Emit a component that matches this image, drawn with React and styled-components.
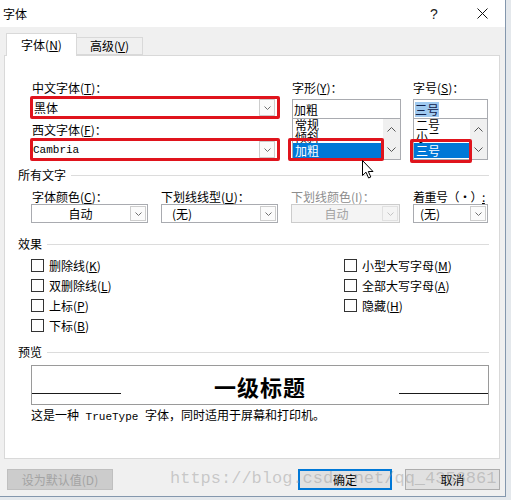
import React from "react";
import styled, { createGlobalStyle } from "styled-components";

const GlobalStyle = createGlobalStyle`
  html, body { margin: 0; padding: 0; }
  body {
    background: #e4e8ec;
    font-family: "Noto Sans CJK SC", "Noto Sans", sans-serif;
    font-size: 12px;
    color: #000;
  }
`;

const Screen = styled.div`
  position: relative;
  width: 511px;
  height: 500px;
  overflow: hidden;
  background: #e4e8ec;
`;

const Dialog = styled.div`
  width: 506px;
  height: 497px;
  box-sizing: border-box;
  background: #f0f0f0;
  border-right: 1px solid #8497ad;
  border-bottom: 1px solid #8497ad;
  display: flex;
  flex-direction: column;
`;

const TitleBar = styled.div`
  height: 27px;
  flex: none;
  background: #fff;
  display: flex;
  align-items: center;
  padding-left: 3px;
`;

const Title = styled.div`
  flex: 1;
  font-size: 12px;
  line-height: 16px;
`;

const CaptionButton = styled.div`
  width: 46px;
  height: 27px;
  margin-left: ${(p) => p.$ml || 0}px;
  display: flex;
  align-items: center;
  justify-content: center;
  font-family: "Liberation Sans", sans-serif;
  font-size: 14px;
  color: #222;
`;

const Body = styled.div`
  flex: 1;
  display: flex;
  flex-direction: column;
  padding: 6px 5px 0 4px;
`;

const TabStrip = styled.div`
  height: 22px;
  display: flex;
  align-items: flex-end;
  padding-left: 2px;
  position: relative;
  z-index: 1;
`;

const Tab = styled.div`
  box-sizing: border-box;
  width: ${(p) => p.$w}px;
  height: ${(p) => (p.$active ? 23 : 18)}px;
  margin-bottom: ${(p) => (p.$active ? -1 : 0)}px;
  background: ${(p) => (p.$active ? "#fff" : "#f0f0f0")};
  border: 1px solid #d9d9d9;
  border-bottom: ${(p) => (p.$active ? "none" : "1px solid #d9d9d9")};
  border-left: ${(p) => (p.$noLeft ? "none" : "1px solid #d9d9d9")};
  display: flex;
  align-items: center;
  justify-content: center;
  line-height: 16px;
  padding-bottom: ${(p) => (p.$active ? 1 : 0)}px;
`;

const Panel = styled.div`
  height: 404px;
  box-sizing: border-box;
  background: #fff;
  border: 1px solid #d9d9d9;
  display: flex;
  flex-direction: column;
`;

const PickRow = styled.div`
  display: grid;
  grid-template-columns: 250px 109px 75px;
  column-gap: 12px;
  margin: 24px 0 0 25px;
`;

const Col = styled.div`
  position: relative;
  display: flex;
  flex-direction: column;
`;

const FieldLabel = styled.div`
  height: 16px;
  line-height: 16px;
  white-space: nowrap;
  padding-left: ${(p) => p.$pad || 0}px;
  margin-top: ${(p) => p.$mt || 0}px;
  letter-spacing: ${(p) => p.$ls || 0}px;
  color: ${(p) => (p.$disabled ? "#8d8d8d" : "#000")};
`;

const RedBox = styled.div`
  height: 23px;
  box-sizing: border-box;
  border: 3px solid #e0141d;
  border-radius: 2px;
  background: #fff;
  display: flex;
  align-items: stretch;
`;

const ComboText = styled.div`
  flex: 1;
  display: flex;
  align-items: center;
  justify-content: ${(p) => (p.$center ? "center" : "flex-start")};
  padding-left: ${(p) => (p.$center ? 0 : p.$pad ?? 2)}px;
  color: ${(p) => (p.$disabled ? "#a3a3a3" : "#000")};
  white-space: pre;
  overflow: hidden;
`;

const Mono = styled.span`
  font-family: "Liberation Mono", monospace;
  font-size: 11px;
  white-space: pre;
`;

const ArrowBox = styled.div`
  width: 16px;
  box-sizing: border-box;
  margin: ${(p) => p.$m || "0 2px 0 0"};
  border: 1px solid ${(p) => (p.$disabled ? "#e0e0e0" : "#cdcdcd")};
  background: ${(p) => (p.$disabled ? "#f4f4f4" : "#fbfbfb")};
  display: flex;
  align-items: center;
  justify-content: center;
`;

const TextInput = styled.div`
  height: 20px;
  margin-top: 3px;
  box-sizing: border-box;
  border: 1px solid #a9abb0;
  background: #fff;
  display: flex;
  align-items: center;
  padding-left: 1px;
`;

const Selection = styled.span`
  background: #9fc9ef;
  color: #10204a;
  line-height: 15px;
`;

const ListBox = styled.div`
  height: 42px;
  margin-top: -1px;
  box-sizing: border-box;
  border: 1px solid #a9abb0;
  background: #fff;
  display: flex;
`;

const ListItems = styled.div`
  flex: 1;
  overflow: hidden;
  display: flex;
  flex-direction: column;
`;

const ListItem = styled.div`
  flex: none;
  height: ${(p) => p.$h}px;
  line-height: ${(p) => p.$h}px;
  padding-left: 2px;
  overflow: hidden;
  background: ${(p) => (p.$selected ? "#0078d7" : "transparent")};
  color: ${(p) => (p.$selected ? "#fff" : "#000")};
`;

const ScrollBar = styled.div`
  width: 17px;
  display: flex;
  flex-direction: column;
  background: #f0f0f0;
`;

const ScrollBtn = styled.div`
  flex: 1;
  display: flex;
  align-items: center;
  justify-content: center;
`;

const RedOverlay = styled.div`
  position: absolute;
  left: ${(p) => p.$l}px;
  top: ${(p) => p.$t}px;
  width: ${(p) => p.$w}px;
  height: ${(p) => p.$h}px;
  box-sizing: border-box;
  border: 3px solid #e0141d;
  border-radius: 2px;
  pointer-events: none;
`;

const GroupHeader = styled.div`
  display: flex;
  align-items: center;
  height: 16px;
  margin: ${(p) => p.$mt}px 10px 0 13px;
  line-height: 16px;
  white-space: nowrap;
`;

const GroupRule = styled.div`
  flex: 1;
  height: 1px;
  margin-left: 5px;
  background: #dcdcdc;
`;

const FieldRow = styled.div`
  display: flex;
  gap: 13px;
  margin: 6px 0 0 26px;
`;

const Field = styled.div`
  width: ${(p) => p.$w}px;
  display: flex;
  flex-direction: column;
`;

const Combo = styled.div`
  height: 19px;
  margin-top: -1px;
  box-sizing: border-box;
  border: 1px solid ${(p) => (p.$disabled ? "#cccccc" : "#a9abb0")};
  background: ${(p) => (p.$disabled ? "#f4f4f4" : "#fff")};
  display: flex;
  align-items: stretch;
`;

const EffectsGrid = styled.div`
  display: flex;
  margin: 3px 0 0 26px;
`;

const CheckCol = styled.div`
  width: ${(p) => p.$w || "auto"};
  display: flex;
  flex-direction: column;
`;

const CheckRow = styled.div`
  height: 20px;
  display: flex;
  align-items: center;
  white-space: nowrap;
`;

const Box = styled.div`
  width: 13px;
  height: 13px;
  box-sizing: border-box;
  border: 1px solid #333;
  background: #fff;
  margin-right: 5px;
`;

const Preview = styled.div`
  height: 40px;
  box-sizing: border-box;
  margin: 5px 10px 0 26px;
  border: 1px solid #9a9a9a;
  display: grid;
  grid-template-columns: 89px 1fr 89px;
  align-items: center;
`;

const PreviewRule = styled.div`
  align-self: start;
  height: 28px;
  box-sizing: border-box;
  border-bottom: 1px solid #1a1a1a;
`;

const PreviewText = styled.div`
  text-align: center;
  font-size: 22px;
  font-weight: 700;
  letter-spacing: 1px;
  line-height: 28px;
  padding-top: 2px;
`;

const Caption = styled.div`
  margin: 2px 0 0 26px;
  height: 16px;
  line-height: 16px;
  white-space: nowrap;
`;

const Footer = styled.div`
  margin-top: 10px;
  height: 21px;
  display: flex;
  align-items: stretch;
  padding-left: 3px;
`;

const Button = styled.div`
  width: ${(p) => p.$w}px;
  box-sizing: border-box;
  margin-left: ${(p) => p.$ml || 0}px;
  display: flex;
  align-items: center;
  justify-content: center;
  background: ${(p) => (p.$disabled ? "#cccccc" : "#e1e1e1")};
  border: 1px solid
    ${(p) => (p.$primary ? "#0078d7" : p.$disabled ? "#bfbfbf" : "#adadad")};
  box-shadow: ${(p) => (p.$primary ? "inset 0 0 0 1px #0078d7" : "none")};
  color: ${(p) => (p.$disabled ? "#a3a3a3" : "#000")};
  white-space: nowrap;
`;

const Spacer = styled.div`
  flex: 1;
`;

const Watermark = styled.div`
  position: absolute;
  left: 170px;
  top: 467px;
  font-family: "Liberation Mono", monospace;
  font-size: 17px;
  line-height: 24px;
  color: rgba(150, 150, 150, 0.45);
  pointer-events: none;
  white-space: nowrap;
`;

const Cursor = styled.svg`
  position: absolute;
  left: 362px;
  top: 160px;
`;

const Chevron = ({ up, color = "#6b6b6b", w = 8, h = 4 }) => (
  <svg width={w + 1} height={h + 1} viewBox={`0 0 ${w + 1} ${h + 1}`}>
    <polyline
      points={
        up
          ? `0.5,${h + 0.5} ${w / 2 + 0.5},0.5 ${w + 0.5},${h + 0.5}`
          : `0.5,0.5 ${w / 2 + 0.5},${h + 0.5} ${w + 0.5},0.5`
      }
      fill="none"
      stroke={color}
      strokeWidth="1"
    />
  </svg>
);

const Key = ({ children }) => <u>{children}</u>;

const ComboArrow = ({ disabled, m }) => (
  <ArrowBox $disabled={disabled} $m={m}>
    <Chevron w={6} h={3} color={disabled ? "#c4c4c4" : "#707070"} />
  </ArrowBox>
);

const List = ({ items }) => (
  <ListBox>
    <ListItems>
      {items.map((it) => (
        <ListItem key={it.t} $h={it.h} $selected={it.sel}>
          {it.t}
        </ListItem>
      ))}
    </ListItems>
    <ScrollBar>
      <ScrollBtn>
        <Chevron up color="#555" />
      </ScrollBtn>
      <ScrollBtn>
        <Chevron color="#555" />
      </ScrollBtn>
    </ScrollBar>
  </ListBox>
);

const CheckItem = ({ label, k }) => (
  <CheckRow>
    <Box />
    {label}(<Key>{k}</Key>)
  </CheckRow>
);

export default function App() {
  return (
    <Screen>
      <GlobalStyle />
      <Dialog>
        <TitleBar>
          <Title>字体</Title>
          <CaptionButton>?</CaptionButton>
          <CaptionButton $ml={2}>
            <svg width="11" height="11" viewBox="0 0 11 11">
              <path d="M0.5 0.5 L10.5 10.5 M10.5 0.5 L0.5 10.5" stroke="#111" strokeWidth="1" />
            </svg>
          </CaptionButton>
        </TitleBar>
        <Body>
          <TabStrip>
            <Tab $active $w={71}>
              字体(<Key>N</Key>)
            </Tab>
            <Tab $w={66} $noLeft>
              高级(<Key>V</Key>)
            </Tab>
          </TabStrip>
          <Panel>
            <PickRow>
              <Col>
                <FieldLabel $pad={2}>
                  中文字体(<Key>T</Key>)：
                </FieldLabel>
                <RedBox>
                  <ComboText $pad={1}>黑体</ComboText>
                  <ComboArrow />
                </RedBox>
                <FieldLabel $pad={2} $mt={3}>
                  西文字体(<Key>F</Key>)：
                </FieldLabel>
                <RedBox>
                  <ComboText $pad={0}>
                    <Mono>Cambria</Mono>
                  </ComboText>
                  <ComboArrow />
                </RedBox>
              </Col>
              <Col>
                <FieldLabel>
                  字形(<Key>Y</Key>)：
                </FieldLabel>
                <TextInput>加粗</TextInput>
                <List
                  items={[
                    { t: "常规", h: 12 },
                    { t: "倾斜", h: 12 },
                    { t: "加粗", h: 15, sel: true },
                  ]}
                />
                <RedOverlay $l={-4} $t={58} $w={96} $h={23} />
              </Col>
              <Col>
                <FieldLabel>
                  字号(<Key>S</Key>)：
                </FieldLabel>
                <TextInput>
                  <Selection>三号</Selection>
                </TextInput>
                <List
                  items={[
                    { t: "二号", h: 12 },
                    { t: "小二", h: 12 },
                    { t: "三号", h: 15, sel: true },
                  ]}
                />
                <RedOverlay $l={-3} $t={59} $w={62} $h={24} />
              </Col>
            </PickRow>

            <GroupHeader $mt={6}>
              所有文字
              <GroupRule />
            </GroupHeader>
            <FieldRow>
              <Field $w={117}>
                <FieldLabel $pad={1}>
                  字体颜色(<Key>C</Key>)：
                </FieldLabel>
                <Combo>
                  <ComboText $center>自动</ComboText>
                  <ComboArrow m="1px" />
                </Combo>
              </Field>
              <Field $w={117}>
                <FieldLabel>
                  下划线线型(<Key>U</Key>)：
                </FieldLabel>
                <Combo>
                  <ComboText $pad={10}>(无)</ComboText>
                  <ComboArrow m="1px" />
                </Combo>
              </Field>
              <Field $w={109}>
                <FieldLabel $disabled>下划线颜色(I)：</FieldLabel>
                <Combo $disabled>
                  <ComboText $center $disabled>
                    自动
                  </ComboText>
                  <ComboArrow m="1px" disabled />
                </Combo>
              </Field>
              <Field $w={75}>
                <FieldLabel $ls={-0.5}>
                  着重号（·）<Key>:</Key>
                </FieldLabel>
                <Combo>
                  <ComboText $pad={6}>(无)</ComboText>
                  <ComboArrow m="1px" />
                </Combo>
              </Field>
            </FieldRow>

            <GroupHeader $mt={13}>
              效果
              <GroupRule />
            </GroupHeader>
            <EffectsGrid>
              <CheckCol $w="313px">
                <CheckItem label="删除线" k="K" />
                <CheckItem label="双删除线" k="L" />
                <CheckItem label="上标" k="P" />
                <CheckItem label="下标" k="B" />
              </CheckCol>
              <CheckCol>
                <CheckItem label="小型大写字母" k="M" />
                <CheckItem label="全部大写字母" k="A" />
                <CheckItem label="隐藏" k="H" />
              </CheckCol>
            </EffectsGrid>

            <GroupHeader $mt={9}>
              预览
              <GroupRule />
            </GroupHeader>
            <Preview>
              <PreviewRule />
              <PreviewText>一级标题</PreviewText>
              <PreviewRule />
            </Preview>
            <Caption>
              这是一种<Mono> TrueType </Mono>字体，同时适用于屏幕和打印机。
            </Caption>
          </Panel>
          <Footer>
            <Button $w={106} $disabled>
              设为默认值(D)
            </Button>
            <Spacer />
            <Button $w={94} $primary>
              确定
            </Button>
            <Button $w={95} $ml={13}>
              取消
            </Button>
          </Footer>
        </Body>
      </Dialog>
      <Watermark>https://blog.csdn.net/qq_4356861</Watermark>
      <Cursor width="13" height="20" viewBox="0 0 13 20">
        <path
          d="M0.5 0.5 L0.5 15.5 L4 12.2 L6.6 18 L8.8 17 L6.3 11.5 L11 11.5 Z"
          fill="#fff"
          stroke="#000"
          strokeWidth="1"
          strokeLinejoin="round"
        />
      </Cursor>
    </Screen>
  );
}
